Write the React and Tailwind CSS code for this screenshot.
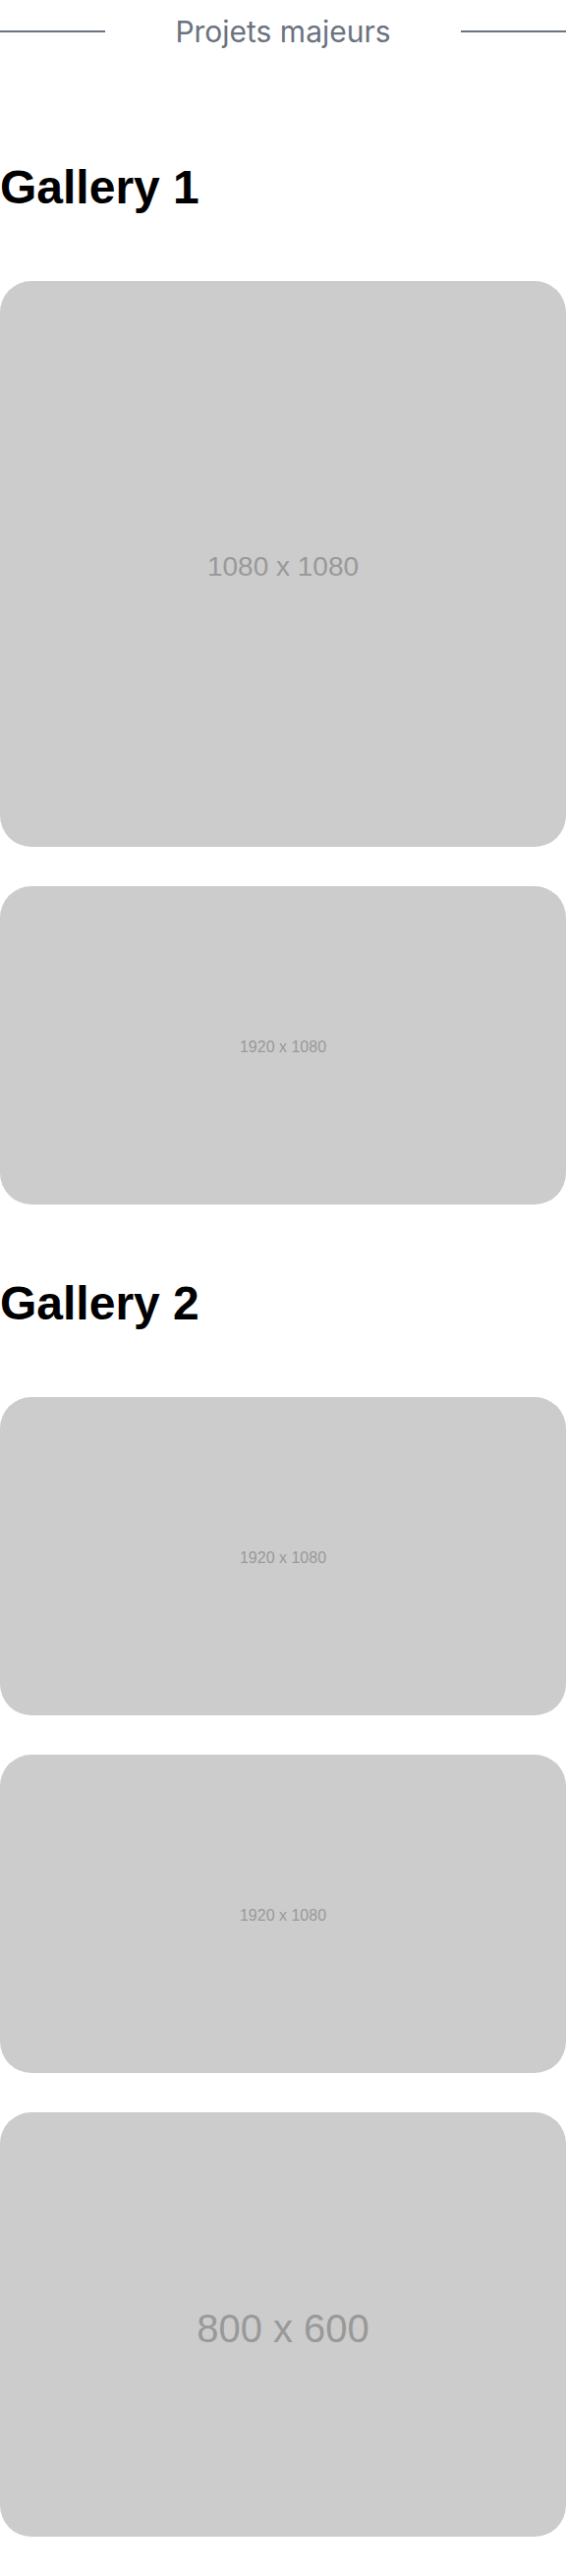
export default function App() {
  const galleries = [
    {
      title: "Gallery 1",
      first: true,
      items: [
        { label: "1080 x 1080", ratio: "aspect-square", size: "text-[28px]" },
        { label: "1920 x 1080", ratio: "aspect-video", size: "text-[16px]" },
      ],
    },
    {
      title: "Gallery 2",
      first: false,
      items: [
        { label: "1920 x 1080", ratio: "aspect-video", size: "text-[16px]" },
        { label: "1920 x 1080", ratio: "aspect-video", size: "text-[16px]" },
        { label: "800 x 600", ratio: "aspect-[4/3]", size: "text-[40px]" },
      ],
    },
  ];

  return (
    <div className="min-h-screen bg-white pt-[14px] pb-10">
      {/* Section title */}
      <div className="flex items-center gap-[71px]">
        <div className="h-[2px] flex-1 bg-[#6b7280]" />
        <h3 className="font-['Inter',sans-serif] text-[30px] font-normal leading-9 text-[#6b7280]">
          Projets majeurs
        </h3>
        <div className="h-[2px] flex-1 bg-[#6b7280]" />
      </div>

      {galleries.map((g) => (
        <section key={g.title} className={g.first ? "mt-[117px]" : "mt-[77px]"}>
          <h2 className="font-['Liberation_Sans',Arial,sans-serif] text-5xl font-bold leading-none text-black">
            {g.title}
          </h2>
          <div className="mt-[71px] flex flex-col gap-10">
            {g.items.map((item, i) => (
              <div
                key={i}
                className={`flex w-full items-center justify-center rounded-[32px] bg-[#cccccc] ${item.ratio}`}
              >
                <span className={`pt-[0.2em] font-['Liberation_Sans',Arial,sans-serif] text-[#999999] ${item.size}`}>
                  {item.label}
                </span>
              </div>
            ))}
          </div>
        </section>
      ))}
    </div>
  );
}
